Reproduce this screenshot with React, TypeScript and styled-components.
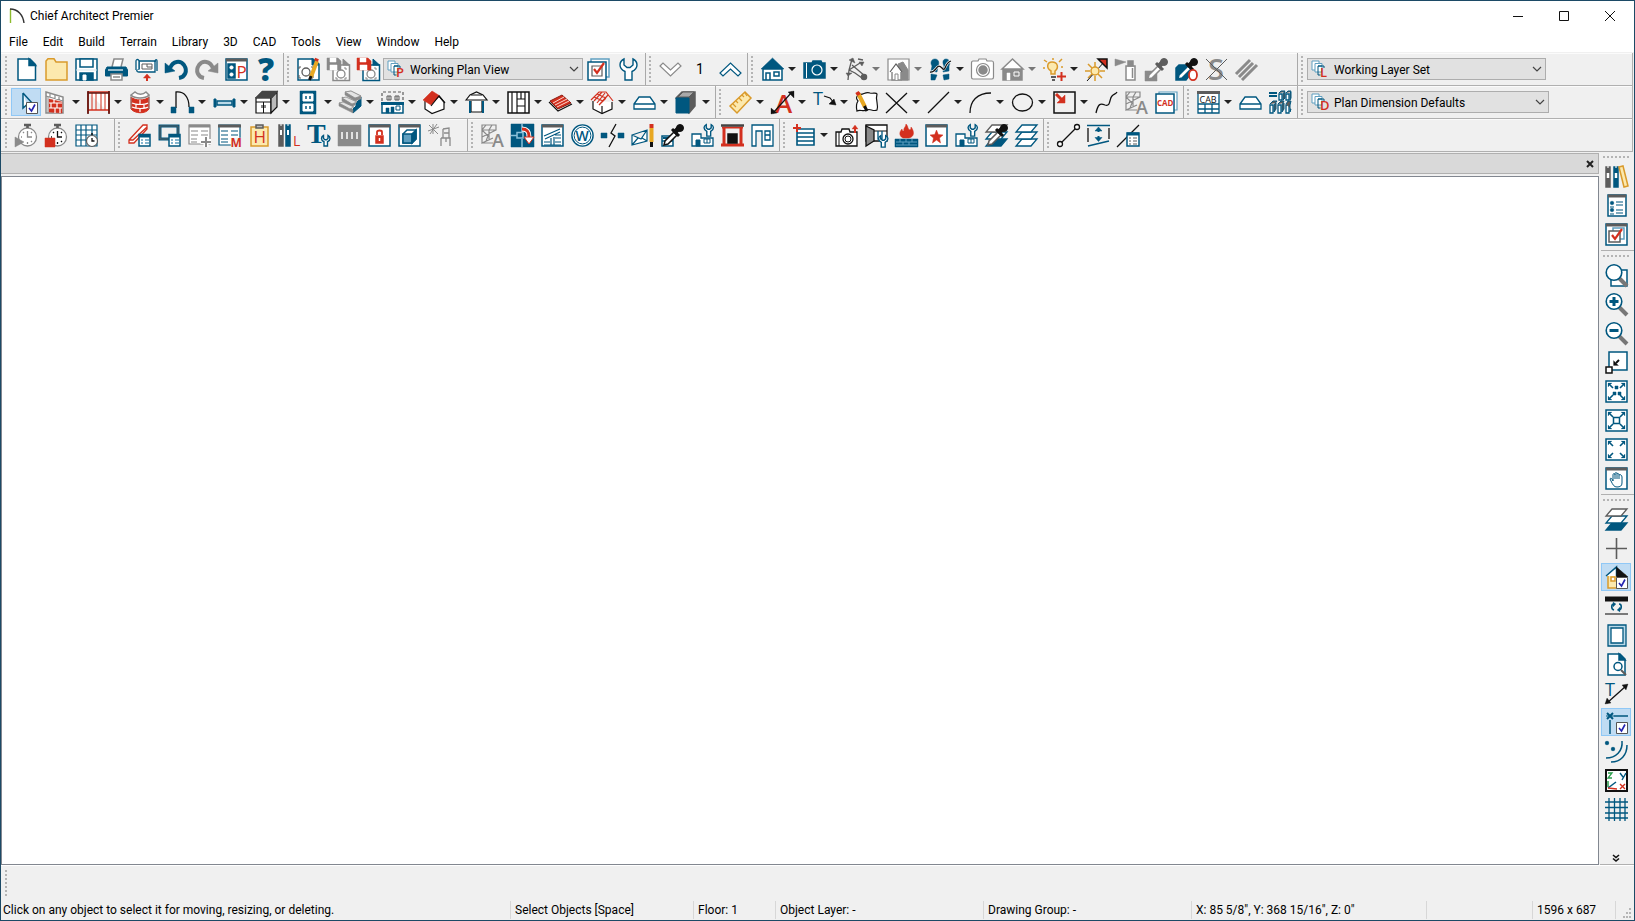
import React from 'react';
import styled, { createGlobalStyle, css } from 'styled-components';

const B = '#00577f';
const L = '#5f9fc0';
const G = '#8a8a8a';
const D = '#5c5c5c';
const R = '#d3301f';
const K = '#111111';
const O = '#d99a2b';
const Y = '#fce9ae';
const W = '#ffffff';
const N = 'none';

const Global = createGlobalStyle`
  * { box-sizing: border-box; }
  body { margin: 0; background: #fff; }
  body, button, select { font-family: Roboto, 'Open Sans', sans-serif; font-size: 12px; color: #000; }
`;

/* ---------- drawing helpers, all on a 23 unit square ---------- */
const p = (d: string, stroke = B, fill = N, w = 1.5) => <path d={d} stroke={stroke} fill={fill} strokeWidth={w} />;
const c = (x: number, y: number, r: number, stroke = B, fill = N, w = 1.5) => (
  <circle cx={x} cy={y} r={r} stroke={stroke} fill={fill} strokeWidth={w} />
);
const t = (x: number, y: number, s: string, fill: string, size: number, weight = 400, family = 'Open Sans, sans-serif') => (
  <text x={x} y={y} fill={fill} fontSize={size} fontWeight={weight} fontFamily={family}>{s}</text>
);
const wrench = (x: number, y: number, k: number, col = B) => (
  <g transform={`translate(${x} ${y}) scale(${k})`}>
    {p('M5 1V7L8 9.500H11L14 7V1C17 2.500 18 4.500 18 7C18 10 16 12 13 13.500V22H6V13.500C3 12 1 10 1 7C1 4.500 2 2.500 5 1Z', col, W, 1.4 / k)}
  </g>
);
const dropper = (dark: string, edge: string) => (
  <>
    {p('M3 21L4 17L13 8L16 11L7 20Z', edge, W, 1.5)}
    {p('M11 5L18 12', dark, N, 3)}
    {p('M13 9L18 4', dark, N, 5)}
    {c(19, 4, 3.5, dark, dark, 1)}
  </>
);
const wallA = (
  <>
    {p('M1 1H15V6H1ZM1 6V19L12 14M1 13L15 6M5 1L1 6L7 12L5 17M11 1L8 6V15M1 19L12 19', G, N, 1.2)}
    {t(11, 22.5, 'A', G, 18, 600)}
  </>
);
const zoomGlass = (
  <>
    {p('M14 14L22 22', '#777', N, 4)}
    {c(9, 8.5, 7.8, B, W, 1.6)}
  </>
);
const tickBox = (
  <>
    {p('M11.500 11.500H22.500V22.500H11.500Z', '#555', W, 1)}
    {p('M14 17L16.500 20L20 13.500', '#2424b0', N, 1.6)}
  </>
);
const hip = p('M1 13L6 6H17L22 13V18H1ZM1 13H22', B, W, 1.3);
const cabHouse = (
  <>
    {p('M1 10H10V14H22V22H1Z', B, W, 1.3)}
    {p('M5 22V16H9V22Z', B, B, 1)}
    {p('M13 15H19V19H13ZM16 15V19', B, N, 1)}
    {wrench(12.5, 0, 0.55)}
  </>
);
const diagArrows = (
  <>
    {p('M1 1H22V22H1Z', B, W)}
    {p('M8 8L5 5M15 8L18 5M8 15L5 18M15 15L18 18', B, N, 1.6)}
    {p('M3 3H7L3 7ZM20 3V7L16 3ZM3 20V16L7 20ZM20 20H16L20 16Z', B, B, 0.2)}
  </>
);
const stack = (a: string, b: string, fa: string, fb: string, fc: string) => (
  <>
    {p('M7 15H22L16 22H1Z', b, fc, 1.3)}
    {p('M7 8H22L16 15H1Z', b, fb, 1.3)}
    {p('M7 1H22L16 8H1Z', a, fa, 1.3)}
  </>
);
const copies = (letter: string) => (
  <>
    {p('M1 1H8V10H1Z', L, W, 1)}
    {p('M4 3.500H11V12H4Z', L, W, 1)}
    {p('M11 6H7V15H9.500M7 6H13V8', B, N, 1)}
    {t(9, 16.5, letter, R, 13, 600)}
  </>
);
const watch = (col: string, fill: string) => (
  <>
    {c(12.5, 13, 9, G, W, 1.3)}
    {p('M9 1H16M12.500 1V4', D, N, 2.6)}
    {p('M12.500 7V13H17M12.500 18V20M6 13H7M8 8L9 9M17 18L16 17M17 8L16 9', col, N, 1.3)}
    {fill === R ? p('M0 14H10V23H0Z', R, R, 0.5) : p('M0 13L9 18L0 23Z', fill, fill, 0.5)}
  </>
);
const panel = (
  <>
    {p('M1 1H22V22H1Z', B, W)}
    {p('M1 2H22', D, N, 3)}
  </>
);
const plug = (col: string) => (
  <>
    {p('M1 1H16L22 6V22H1Z', col, W)}
    {p('M15 0V7H22', col, col, 1)}
    {c(9, 14, 4, D, W, 1.3)}
    {p('M2 11V9H4M14 9H16V11M2 17V20H4M14 20H16V17', D, N, 1)}
  </>
);
const savePlug = (col: string, back: string) => (
  <>
    {p('M6 7H22.500V22.500H6Z', back, W)}
    {p('M16 1V7H22.500Z', back, back, 1)}
    {c(14, 16, 4, G, W, 1.3)}
    {p('M9 12V10H11M17 10H19V12M9 19V21H11M17 21H19V19', G, N, 1)}
    {p('M0 0H11L14 3V12H0Z', col, col, 0.5)}
    {p('M3 0H9V4H3ZM3 7H10V12H3Z', W, W, 0.5)}
  </>
);
const sqArrow = (
  <>
    {p('M4 1H22V19H4Z', B, W)}
    {p('M1 16H7V22H1Z', K, W)}
    {p('M14 9L11 12', K, N, 2)}
    {p('M8.500 14.500V9.500L13.500 14.500Z', K, K, 0.2)}
  </>
);
const chimney = (
  <>
    {p('M3 4V21M20 4V21', R, N, 3)}
    {p('M1 3.500H22', R, N, 2)}
    {p('M0 1.500H23', '#444', N, 2.5)}
    {p('M0 21H23', R, N, 3)}
    {p('M7 10H16V19H7Z', K, K)}
  </>
);
const smallList = (
  <>
    {p('M11 10.500H22V22H11Z', B, W)}
    {p('M11 12H22', B, N, 3)}
    {p('M13 16H15M17 16H21M13 19H15M17 19H21', L)}
  </>
);

const icons: Record<string, React.ReactNode> = {
  newPage: <>{p('M3 1H15L20.500 6.500V22H3Z', B, W)}{p('M14 1V7.500H20.500Z', B, B)}</>,
  open: p('M1 22V3L3 .8H9L11 4H22V22Z', O, Y),
  save: <>{p('M1 1H22V22H1Z', B, W)}{p('M5 1H18V9H5Z', B, W)}{p('M5 15H18V22H5Z', B, B)}{p('M8 17H11V22H8Z', W, W, 1)}{p('M1 12H22', '#d5e3ea', N, 1)}</>,
  print: <>{p('M7 9L9 1H18L16 9', G, W)}{p('M2 9H21L22.500 12V18H.5V12Z', B, B, 1)}{p('M3 12H18', W, N, 1.2)}{p('M6 16H17V22H6Z', G, W)}{p('M8 19H15', G)}</>,
  layout: <>{p('M4 3H20V14H4C1 14 1 11 4 11Z', B, W, 1.3)}{p('M4 11V3C4 1 1 1 1 3V12', B, W, 1.3)}{p('M20 4C20 1 22 1 22 3V13', B, N, 1.3)}{p('M7 6H17V11H7ZM12 6V9H17', D, N, 1)}{p('M12 23V18', R, N, 2)}{p('M8.500 20L12 16L15.500 20Z', R, R, 0.5)}</>,
  undo: <>{p('M5 10C8 3 15 2 19 7C23 13 20 19 14 20', B, N, 4)}{p('M0 5V15L10 13Z', B, B, 0.5)}</>,
  redo: <>{p('M18 10C15 3 8 2 4 7C0 13 3 19 9 20', G, N, 4)}{p('M23 5V15L13 13Z', G, G, 0.5)}</>,
  planP: <>{panel}{p('M3 6H10V20H3Z', B, B)}{c(6.5, 9.5, 1.8, W, W, 0.5)}{c(6.5, 16.5, 1.8, W, W, 0.5)}{t(11.5, 19.5, 'P', R, 17)}</>,
  help: t(3, 23, '?', B, 32, 800),
  planEdit: <>{plug(B)}{p('M14 19L20 3', '#e8a823', N, 4)}{p('M12.500 22L14 18', K, N, 3)}{p('M19 3L20 .5', R, N, 4)}</>,
  saveGray: savePlug(G, G),
  saveRed: savePlug(R, B),
  checkPages: <>{p('M4 1H22V19H4Z', L, W)}{p('M1 4H19V22H1Z', B, W)}{p('M5 8H15V18H5Z', D, W, 1.2)}{p('M7 11L10 15L17 5', R, N, 2.2)}</>,
  wrench: wrench(2, 0, 1),
  down: p('M1 8L4 5L11.500 12L19 5L22 8L11.500 18Z', G, W, 1.2),
  up: p('M1 15L4 18L11.500 11L19 18L22 15L11.500 5Z', B, W, 1.2),
  house: <>{p('M0 11L11.500 0L23 11Z', B, B, 0.5)}{p('M2 11H21V22H2Z', B, W)}{p('M5 22V15H9V22')}{p('M13 14H18V18H13Z')}</>,
  camera: <>{p('M1 5H9L10 3H18L19 5H22V20H1Z', B, B)}{p('M3.500 5V20', W, N, 1)}{c(14, 12, 5, W, B, 1.2)}{c(14, 12, 2.6, B, B, 1)}</>,
  joints: <>{p('M7 1L4 12L3 22M4 12L15 5M7 7L20 18M13 1L18 2M4 12L10 15L17 20', D, N, 1.3)}{c(19, 19, 2.5, D, D)}{p('M4 2L8 0L10 5ZM14 4L19 4L17 8ZM1 15H7L3 18Z', D, D, 0.5)}</>,
  houseFrame: <>{p('M1 1H22V22H1Z', G, W, 1.2)}{p('M11 6L16 4L21 12V22H14Z', G, G, 1)}{p('M5 13H14V22H5Z', G, W)}{p('M3 14L9 6L15 14', D, W, 1.2)}{p('M8 22V16H11V22', G, W, 1)}</>,
  feet: <>{p('M6 1C2 1 1 5 3 8L2 13L8 14L9 8C11 4 9 1 6 1ZM2 16L8 17L6 22H2ZM17 1C14 1 13 4 15 8L14 14L20 13V8C22 4 20 1 17 1ZM14 17L20 16L20 21L15 22Z', B, B, 0.5)}{p('M1 14C8 15 7 4 13 10C17 15 15 5 22 3', W, N, 2.4)}{p('M1 14C8 15 7 4 13 10C17 15 15 5 22 3', K, N, 1.3)}</>,
  cameraGray: <>{p('M2 3H7L8 1H15L16 3H21V3C22 3 22.500 4 22.500 5V19C22.500 20 22 21 21 21H2C1 21 .5 20 .5 19V5C.5 4 1 3 2 3Z', G, W, 1.2)}{c(12, 12, 6.5, G, W, 1.2)}{c(12, 12, 4, G, G)}</>,
  houseGray: <>{p('M2 11H21V22H2Z', G, G)}{p('M1 11L11.500 1L22 11Z', G, W)}{p('M6 15H9V22H6Z', W, W, 0.5)}{p('M13 14H18V18H13Z', W, G, 1)}</>,
  bulb: <>{p('M8 16V13C3 10 4 4 9 4C15 4 16 10 12 13V16Z', O, Y)}{p('M8 19H13M9 22H12', D, N, 2)}{p('M10 0V2M1 2L4 4M19 1L16 4M0 10H2M18 9H20', O)}{p('M18.500 14V23M14 18.500H23', R, N, 2)}</>,
  sun: <>{p('M10 4V9M10 18V23M0 13H5M15 13H20M3 6L7 10M3 20L7 16M17 20L13 16', O)}{p('M2 23L20 3', K, N, 1)}{c(10, 13, 4, O, Y)}{p('M13 1H22V10Z', K, R)}</>,
  spray: <>{p('M11 8H20V22H11Z', G, W)}{p('M13 3H18V8H13Z', G, G)}{p('M0 1L11 4L0 8Z', G, G, 0.5)}{p('M17.500 10V20', G)}</>,
  dropperGray: <>{p('M0 13H9L12 16V23H0Z', G, G, 0.5)}{dropper(D, G)}</>,
  dropperO: <>{p('M1 10L4 7H14V18L11 22H1Z', B, B)}{dropper(K, B)}<ellipse cx={18} cy={17} rx={4} ry={5.2} fill={W} stroke={R} strokeWidth={1.8} /></>,
  noS: <>{t(3, 22, 'S', G, 29, 600)}{p('M1 1L22 22M22 1L1 22', D, N, 1)}</>,
  stripes: p('M1 16L15 2M4 19L18 5M7 22L22 7', G, N, 3),

  select: <>{p('M8 2V17L11.500 14L14 20M8 2L18 13', B, W)}{tickBox}</>,
  wall: <>{p('M1 1L18 6V22H1Z', G, W)}{p('M1 5L18 10M5 3V6M10 4V8M14 6V9', G, N, 1.2)}{p('M4 8L17 11V22L4 21Z', R, R, 0.5)}{p('M4 12H17M4 17H17M9 8V12M6 12V17M12 12V17M10 17V22M15 17V22', W, N, 1.2)}{p('M3 6V22', G, N, 1)}</>,
  fence: <>{p('M1 1H22V22M1 1V22M1 19H22', R, W)}{p('M5 2V19M9 2V19M14 2V19M18 2V19', R, N, 1)}{p('M1 0V23M22 0V23M1 2H22', '#5b1510', N, 1.6)}</>,
  curved: <>{p('M2 6C6 10 16 10 20 6V18C17 23 6 23 2 18Z', R, R, 1)}{p('M2 4L6 1C9 4 14 4 17 1L20 4C16 8 6 8 2 4Z', G, W)}{p('M2 4V18M20 4V18', G, N, 1)}{p('M3 12C7 14 16 14 19 12M3 16C7 18 16 18 19 16M11 9V13M7 13V17M15 13V17M11 18V21', W, N, 1.2)}</>,
  door: <>{p('M5 17V1C13 0 18 6 18 16', K, N, 1.3)}{p('M0 16H5V22H0ZM18 16H23V22H18Z', B, B, 0.5)}</>,
  window: <>{p('M4 10H19V14H4Z', B, '#b9d9e8')}{p('M1 8H3V16H1ZM20 8H22V16H20Z', B, B, 1)}</>,
  cabinet: <>{p('M1 7H16V22H1Z', K, W, 1.2)}{p('M16 7L22 1V16L16 22Z', K, '#bbb', 1.2)}{p('M0 7L7 0H23L17 7Z', '#444', '#444', 0.5)}{p('M1 11H16M8.500 11V22M7 14V17M10 14V17', K, N, 1)}</>,
  outlet: <>{p('M3 0H19V23H3Z', B, B, 0.5)}{p('M6 3H16V10H6ZM6 13H16V20H6Z', W, W, 1)}{p('M9 5V8M13 5V8M9 15V18M13 15V18', B, N, 1.5)}</>,
  stairs: <>{p('M22 6V15L14 22V18L17 15V12L20 9Z', B, B, 1)}{p('M6 1L12 0L22 5V8L16 10L6 4ZM3 6L16 12V14L12 16L3 10ZM0 12L12 17L14 19V22L0 15Z', G, G, 0.5)}{p('M6 1L12 0L22 5L16 7ZM3 7L7 6L18 11L13 13ZM0 12L4 11L15 16L11 18Z', G, '#e4e4e4', 0.8)}</>,
  floors: <><path d="M1 10V1H22V10" stroke={D} strokeWidth={1.2} strokeDasharray="3 2" />{p('M1 12V22H22V12', B, W)}{p('M0 12.500H23', B, N, 3)}{p('M5 22V17H8V22ZM10 22V16H13V22Z', B, B, 0.5)}{p('M15 15H19V19H15Z', B, N, 1)}{p('M6 5H10V9H6ZM8 5V9M14 5H18V9H14ZM16 5V9', D, N, 1)}</>,
  roof: <>{p('M2 10V18L9 22.500L21 18V11L16 5', K, W, 1.2)}{p('M0 9L9 0L17 5L8 14Z', R, R, 0.5)}{p('M8 15L16 5L22 12', K, N, 1.2)}</>,
  porch: <>{p('M1 9L5 4L11.500 1L18 4L22 9Z', K, W, 1.2)}{p('M6 10V21H17V10', K, W, 1.2)}{p('M5 10V22M18 10V22', B, N, 2)}{p('M6 4H17', K, N, 1)}</>,
  framing: <>{p('M1 1H22V22H1Z', K, W)}{p('M5 1V22M10 1V22M18 1V22M10 8H18M10 15H18M14 1V8', K, N, 1.2)}</>,
  deck: <>{p('M1 10L13 4L22 12L9 18Z', '#8c1d14', R, 1)}{p('M4 12L15 6M6 14L18 8M8 16L20 10', '#ffd9d2', N, 1)}{p('M0 11L9 20L23 13', K, N, 1.2)}</>,
  truss: <>{p('M2 10V18L11 22.500L21 18V11', K, W, 1.2)}{p('M11 22V15', K, N, 1.2)}{p('M0 9L8 1H15L22 10M3 10L11 1M6 12L14 2M8 14L17 4M3 6L12 10M6 3L15 7M8 14L15 7', R, N, 1.2)}</>,
  hip,
  cube: <>{p('M1 7L7 1H20V15L14 22Z', D, D)}{p('M3 6L8 1H19L14 6Z', D, '#a9a9a9', 1)}{p('M1 7H14V22H1Z', B, B, 1)}</>,
  ruler: <>{p('M1 15L16 1L22 7L8 22Z', O, Y)}{p('M4 13L7 16M7 10L9 12M10 7L13 10M13 4L15 6M16 2L18 5', O, N, 1.2)}</>,
  textA: <>{t(4, 22, 'A', R, 26, 600)}{p('M2 22L21 1', K, N, 1.2)}{p('M0 23V17L6 22ZM23 0V7L17 1Z', K, K, 0.3)}</>,
  textT: <>{t(0, 14, 'T', B, 18, 400)}{p('M11 5L17 7L21 12', K, N, 1.2)}{p('M23 14L16 13L21 8Z', K, K, 0.5)}</>,
  poly: <>{p('M4 3C8 5 10 0 15 2C18 3 21 1 22 3C20 9 24 14 22 19C18 21 15 17 12 19C8 21 5 18 2 20C1 16 1 13 3 10C0 7 2 5 4 3Z', K, W, 1.2)}{p('M3 2L10 16', '#e8a823', N, 4)}{p('M9.500 15L12 20', K, N, 3)}{p('M2 1L4 4', R, N, 4)}</>,
  cross: p('M1 2L22 22M22 2L1 22', K, N, 1.3),
  line: p('M1 22L22 1', K, N, 1.3),
  arc: p('M1 22C1 10 8 2 22 2', K, N, 1.3),
  ellipse: <ellipse cx={11.5} cy={11.5} rx={10} ry={8.5} fill={N} stroke={K} strokeWidth={1.3} />,
  rect: <>{p('M1 1H22V22H1Z', K, N)}{p('M3 3L9 9', R, N, 3)}{p('M12 4V12H4Z', R, R, 0.5)}</>,
  spline: p('M1 22C3 13 5 12 10 14C16 16 14 8 17 5C19 3 21 3 22 1', K, N, 1.3),
  wallA,
  cad: <>{p('M4 1H22V19H4Z', L, W, 1.2)}{p('M1 3H19V22H1Z', B, W)}{t(2, 15, 'CAD', R, 8, 700)}</>,
  cab: <>{p('M1 1H22V22H1ZM1 13H22M1 18H22M8 13V22M15 13V22', B, W, 1.3)}{p('M0 1.500H23', D, N, 3)}{t(2.5, 11.5, 'CAB', K, 9)}</>,
  cabs: <>{p('M0 2H8M0 5H8', B, N, 2)}{p('M10 3H13V9H10ZM17 3H20V9H17ZM1 14H4V22H1ZM9 14H12V22H9ZM17 14H20V22H17Z', B, W, 1.3)}{p('M10 2L12 0H16L14 3V9L16 7V1M17 2L19 0H22L21 3V9L22 7V1M1 13L4 10H8L5 14V21L7 18V12M9 13L12 10H15L13 14V21L15 18V12M17 13L19 10H22L21 14V21L22 18', B, D, 1)}</>,

  watchGray: watch(G, G),
  watchRed: watch(K, R),
  tableWatch: <>{p('M1 1H22V22H1ZM1 6H22M1 11H22M1 16H22M6 1V22M11 1V22M17 1V22', B, W, 1.2)}{c(17, 17, 5.5, D, W, 1.2)}{p('M17 14V17H19.500M16 10H18', K, N, 1.3)}</>,
  deckEdit: <>{p('M1 16L15 1H19V5L6 19H1ZM1 16H5L19 3', R, W, 1.3)}{smallList}</>,
  squares: <>{p('M2 2H20V15H2Z', B, '#efefef', 3)}{p('M2 2H20V15H2Z', D, N, 1)}{smallList}</>,
  tablePlus: <>{p('M1 1H22V20H1Z', G, W, 1.2)}{p('M1 2H22', G, N, 3)}{p('M3 7H10M13 7H20M3 11H10M13 11H20M3 15H9M3 18H9', G, N, 1.2)}{p('M18 12V23M12.500 17.500H23', W, N, 5)}{p('M18 13V23M13 18H23', G, N, 2)}</>,
  tableM: <>{p('M1 1H22V21H1Z', B, W, 1.2)}{p('M0 2H23', D, N, 3)}{p('M3 7H10M13 7H20M3 11H10M13 11H20M3 15H10M3 18H10', B, N, 1.2)}{p('M13 14H23V23H13Z', '#f0f0f0', '#f0f0f0', 0.5)}{t(12.5, 23, 'M', R, 12, 700)}</>,
  clip: <>{p('M3 3H20V22H3Z', O, Y)}{p('M8 4H15V1H8Z', D, '#bbb')}{t(5.5, 19, 'H', R, 17, 400)}</>,
  booksL: <>{p('M1 1H5V22H1Z', D, D)}{p('M8 1H12V22H8Z', B, B)}{p('M3 6V11M10 6V11', W, N, 2)}{p('M3 0V2M10 0V2', W, N, 1)}{t(15, 22, 'L', R, 14)}</>,
  tWrench: <>{t(-1, 19, 'T', B, 28, 700, 'Liberation Serif, serif')}{wrench(13, 11, 0.5)}</>,
  grayBars: <>{p('M0 1H23V22H0Z', G, G, 0.5)}{p('M4 8V15M9 8V15M14 8V15M19 8V15', W, N, 1.5)}</>,
  lock: <>{panel}{p('M8 12H15V19H8Z', R, R)}{p('M9 11V8C9 6 14 6 14 8V11', R, N, 1.8)}{p('M11.500 14V17', W)}</>,
  cubePanel: <>{panel}{p('M5 10L9 6H18V15L14 19H5Z', B, W)}{p('M5 10H14V19H5Z', B, L)}{p('M14 10L18 6V15L14 19Z', B, B)}</>,
  chair: <>{p('M13 14V22M13 14H22V22M15 5L21 4V14M15 5V14M18 14V18M16 9H21', G, N, 1.3)}{p('M0 7L11 3M5 0V10M1 1L10 10M9 0L2 10', G, N, 1)}</>,
  blueArrow: <>{p('M0 0H23V23H0Z', B, B, 0.5)}{p('M0 11.500H6M11 0V8M11 15V23M6 8.500H12V14H6Z', '#8bc1da')}{p('M11 5C18 5 18 10 18 13', W, N, 5)}{p('M11 5C18 5 18 10 18 13', R, N, 3)}{p('M13 13H23L18 20Z', R, W, 1)}</>,
  roofPanel: <>{panel}{p('M3 12L19 5M4 15L19 8M10 14V21M13 13V21M3 18H9M14 11H20M14 14H20M14 18H20M3 21H20', B, N, 1.2)}</>,
  circleW: <>{c(11.5, 11.5, 10.6, B, W, 1.4)}{c(11.5, 11.5, 8.4, B, W, 1)}{t(4.5, 16.5, 'W', B, 14, 600)}</>,
  breakLine: <>{p('M0 9H6V14H0ZM17 9H23V14H17Z', B, B, 0.5)}{p('M15 0L10 9L14 12L8 23', K, N, 1.3)}</>,
  envPencil: <>{p('M1 11L16 6V17L1 21ZM1 11L10 15L16 6M1 21L7 14M16 17L11 14', B, W, 1.2)}{p('M20.500 4V18', '#e8a823', N, 4)}{p('M20.500 18V23', K, N, 3)}{p('M20.500 0V4', R, N, 4)}</>,
  dropperBlue: <>{p('M1 12H12V22H1ZM1 17H12', B, W)}{p('M2 14H11', B, B, 2)}{dropper(K, K)}</>,
  cabHouse,
  chimney,
  doorWin: <>{p('M1 1H22V22H11V7H5V22H1Z', B, W, 1.3)}{p('M14 7H19V16H14ZM14 11H19', B, N, 1.3)}</>,
  listPlus: <>{p('M4 5H21V21H4ZM4 9H21M4 13H21M4 17H21', B, W, 1.6)}{p('M4 0V8M0 4H8', R, N, 2)}</>,
  cameraUp: <>{p('M1 8H6L7 5H14L15 8H22V22H1Z', K, W, 1.3)}{p('M4 8V22', K, N, 1)}{c(13, 15, 5, K, W, 1.3)}{c(13, 15, 3, K, W, 1)}{p('M20 9V3', R, N, 2)}{p('M17 5L20 1L23 5Z', R, R, 0.3)}</>,
  cabWrench: <>{p('M1 1H22V17H1Z', K, W, 1.3)}{p('M1 2L9 6V17L1 22Z', K, '#8a8a8a', 1.3)}{p('M9 7H22', K, N, 1)}{p('M13 7V15H17V7', B, N, 1.3)}{wrench(13, 11, 0.55)}</>,
  fire: <>{p('M11 0C14 3 12 5 15 6C16 5 16 4 16 3C20 8 19 13 14 14H8C4 12 4 8 7 5C7 7 8 7 9 7C8 4 11 3 11 0Z', R, R, 0.5)}{p('M0 15H23V23H0Z', B, B, 0.5)}{p('M1 18H22M1 21H22M5 15V18M11 15V18M17 15V18M8 18V21M14 18V21', L, N, 1)}</>,
  star: <>{panel}{p('M11.500 6L13.300 10.500L18 11L14.500 14L15.500 19L11.500 16L7.500 19L8.500 14L5 11L9.700 10.500Z', R, R, 0.5)}</>,
  stackDrop: <>{stack(D, B, W, W, B)}{dropper(K, D)}</>,
  stackBlue: stack(B, B, W, W, W),
  nodes: <>{p('M3 20L20 3', K, N, 1.3)}{c(3, 20, 2.5, K, W, 1.3)}{c(20, 3, 2.5, K, W, 1.3)}</>,
  spacing: <>{p('M0 1.500H23M1 22L22 17', B, N, 1.6)}{p('M1 4V18M22 4V15', K, N, 1.3)}{p('M11.500 5V8M11.500 12V15', B, N, 2)}{p('M8 7L11.500 3L15 7ZM8 13.500H15L11.500 17.500Z', B, B, 0.5)}</>,
  lineList: <>{p('M0 23L22 1', K, N, 1.3)}{p('M10 9H22V22H10Z', B, W)}{p('M10 10H22', B, N, 3)}{p('M12 14H14M16 14H20M12 17H14M16 17H20M12 20H14M16 20H20', D, N, 1.2)}</>,

  books: <>{p('M1 2H5V22H1ZM1 2L3 4L5 2', D, D)}{p('M9 2H13V22H9ZM9 2L11 4L13 2', B, B)}{p('M3 8V13M11 8V13', W, N, 2.5)}{p('M3 0V3M11 0V3', '#f0f0f0', N, 1.2)}{p('M14 2L18 1L23 21L19 22Z', O, Y)}</>,
  checklist: <>{p('M3 1H21V22H3Z', B, W)}{p('M3 2H21', D, N, 3)}{c(7, 9, 1.8, B, B, 0.5)}{c(7, 16, 1.8, B, B, 0.5)}{p('M5 13H9M5 20H9M11 8H18M11 11H18M11 16H18M11 19H18', B, N, 1.2)}</>,
  checkPanel: <>{panel}{p('M8 5H19V16H8Z', L, W)}{p('M4 8H15V19H4Z', D, W)}{p('M7 12L10 16L17 6', R, N, 2.2)}</>,
  zoomPage: <>{p('M6 6H22V22H6Z', B, W)}{zoomGlass}</>,
  zoomIn: <>{zoomGlass}{p('M9 4V13M4.500 8.500H13.500', B, N, 3)}</>,
  zoomOut: <>{zoomGlass}{p('M4.500 8.500H13.500', B, N, 3)}</>,
  sqArrow,
  fitDots: <>{diagArrows}{p('M10 6H13V9H10ZM8 12H11V15H8ZM13 12H16V15H13Z', B, B, 0.5)}</>,
  fitBox: <>{diagArrows}{p('M8.500 8.500H14.500V14.500H8.500Z', B, W)}</>,
  fit: diagArrows,
  pan: <>{panel}{p('M6 14L5 12C6 10 7 12 8 14V8C8 6 10 6 10 8V7C10 5 12 5 12 7C12 6 14 6 14 8C15 7 17 8 17 10V16C17 19 15 20 12 20C9 20 8 18 6 14ZM10 8V12M12 7V12M14 8V12', B, W, 1)}</>,
  layersMix: stack(D, B, W, W, B),
  plus: p('M11.500 1V22M1 11.500H22', D, N, 1.6),
  houseTick: <>{p('M3 9H20V22H3Z', O, Y)}{p('M6 11H10V15H6Z', O, W)}{p('M1 10L11.500 1V10', B, W)}{p('M11.500 1L23 11H11.500Z', K, K, 0.5)}{tickBox}</>,
  barRotate: <>{p('M0 4H23', K, N, 5)}{p('M0 19H23', D, N, 1.6)}{p('M9 9C6 9 6 14 9 15M14 15C17 14 17 9 14 9', B, N, 1.6)}{p('M8 7L11 9L8 12ZM15 17L12 15L15 12Z', B, B, 0.2)}</>,
  frame: <>{p('M3 1H21V22H3Z', B, '#b9d9e8', 1.3)}{p('M6 4H18V19H6Z', B, W, 1.3)}</>,
  pageZoom: <>{p('M3 1H15L20 6V22H3Z', B, W)}{p('M14 1V7H20Z', B, B)}{p('M16 17L21 22', D, N, 2)}{c(13, 13.5, 4, B, W)}</>,
  tArrow: <>{t(0, 14, 'T', B, 18, 400)}{p('M2 21L21 4', K, N, 1.3)}{p('M0 22L2 16L6 21ZM23 2L17 3L21 8Z', K, K, 0.3)}</>,
  snapX: <>{p('M5 9V23M9 5H23', B)}{p('M2 2L8 8M8 2L2 8', B, N, 2)}{p('M1 5H9', B, N, 1)}{tickBox}</>,
  arcs: <>{c(2, 3, 2, B, B, 0.2)}{c(8, 9, 2, B, B, 0.2)}{p('M17 1C18 11 11 18 1 18M22 5C22 15 16 22 6 22', B)}</>,
  axes: <>{p('M1 1H22V22H1Z', K, W, 2)}{p('M3 4H7L3 9H7', '#2a9d4b', N, 1.3)}{p('M15 4L18 8M21 4L17 11', B, N, 1.4)}{p('M15 15L20 20M20 15L15 20', R, N, 1.4)}{p('M3 12V18', '#2a9d4b')}{p('M3 19L11 13', B)}{p('M3 19L12 20', R)}</>,
  grid: p('M4 0V23M9.500 0V23M15 0V23M20 0V23M0 4H23M0 9.500H23M0 15H23M0 20H23', B, N, 1.3),
  copiesP: copies('P'),
  copiesL: copies('L'),
  copiesD: copies('D'),
};

/* ---------- styled parts ---------- */
const Frame = styled.div`
  display: flex; flex-direction: column; min-height: 100vh;
  border: 1px solid #1c4a66; background: #fff;
`;
const TitleBar = styled.header`
  display: flex; align-items: center; height: 29px; padding: 0 1px 0 8px;
`;
const Title = styled.h1`
  flex: 1; margin: 0 0 0 5px; font-size: 12px; font-weight: 400; line-height: 16px;
`;
const Glyph = styled.svg<{ $s: number }>`
  display: block; flex: none; width: ${q => q.$s}px; height: ${q => q.$s}px; fill: none; overflow: visible;
`;
const CaptionButton = styled.button`
  display: flex; align-items: center; justify-content: center;
  width: 46px; height: 28px; padding: 0; border: 0; background: transparent;
`;
const MenuBar = styled.nav`
  display: flex; height: 22px; align-items: center; padding: 2px 0 0 1px;
`;
const MenuItem = styled.button`
  padding: 0 8px 0 7px; border: 0; background: transparent; line-height: 20px;
`;
const Toolbars = styled.div`
  border-top: 1px solid #f0f0f0; background: #f0f0f0;
`;
const Row = styled.div`
  display: flex; height: 33px; padding-left: 1px; margin-right: 1px;
  border-bottom: 1px solid #b0b0b0; border-right: 1px solid #b0b0b0;
  box-shadow: inset 0 1px #fbfbfb;
`;
const Group = styled.div<{ $tail?: number; $last?: boolean }>`
  display: flex; align-items: center; padding-right: ${q => q.$tail ?? 2}px;
  ${q => !q.$last && css`border-right: 1px solid #a9a9a9;`}
`;
const dots = css`
  background-image: radial-gradient(circle at 1px 1px, #b4b4b4 1px, transparent 1px);
`;
const Grip = styled.span`
  flex: none; width: 2px; height: 26px; margin: 0 4px 0 3px; ${dots} background-size: 2px 4px;
`;
const SideGrip = styled.span`
  flex: none; width: 26px; height: 2px; margin: 4px 0 4px 2px; ${dots} background-size: 4px 2px;
`;
const Tool = styled.button<{ $on?: boolean }>`
  display: flex; align-items: center; justify-content: center; flex: none;
  width: 30px; height: 28px; padding: 0;
  border: 1px solid ${q => (q.$on ? '#90c8f6' : 'transparent')};
  background: ${q => (q.$on ? '#c0dcf3' : 'transparent')};
`;
const Drop = styled.button<{ $dim?: boolean }>`
  flex: none; width: 12px; height: 28px; padding: 0; border: 0; background: transparent;
  &::before {
    content: ''; display: block; width: 0; margin-left: 1px;
    border: 4px solid transparent; border-bottom: 0; border-top-color: ${q => (q.$dim ? '#777' : '#222')};
  }
`;
const Floor = styled.output`
  width: 30px; text-align: center; font-size: 14px; line-height: 20px;
`;
const ComboBox = styled.label<{ $w: number }>`
  position: relative; display: block; width: ${q => q.$w}px; height: 22px;
`;
const Select = styled.select`
  appearance: none; display: block; width: 100%; height: 22px; padding: 2px 24px 0 26px;
  border: 1px solid #adadad; border-radius: 0; background: #e1e1e1; line-height: 18px;
`;
const ComboIcon = styled.span`
  position: absolute; left: 4px; top: 2px; pointer-events: none;
`;
const ComboArrow = styled.span`
  position: absolute; right: 4px; top: 6px; pointer-events: none;
`;
const Middle = styled.div`
  flex: 1; display: flex; background: #f0f0f0;
`;
const Documents = styled.main`
  flex: 1; min-width: 0; display: flex; flex-direction: column; padding: 1px 1px 0 0;
`;
const TabStrip = styled.div`
  display: flex; align-items: center; justify-content: flex-end; height: 21px; margin-bottom: 2px;
  border: 1px solid #b0b0b0; border-left: 0; background: #d9d9d9;
`;
const TabClose = styled.button`
  width: 17px; height: 19px; padding: 0; border: 0; background: transparent;
  display: flex; align-items: center; justify-content: center;
`;
const Canvas = styled.section`
  flex: 1; background: #fff; border: 1px solid #828790;
`;
const Sidebar = styled.aside`
  display: flex; flex-direction: column; width: 34px; padding-left: 1px; border-bottom: 1px solid #b0b0b0;
`;
const SideGroup = styled.div<{ $last?: boolean }>`
  display: flex; flex-direction: column; padding-bottom: 1px;
  ${q => !q.$last && css`border-bottom: 1px solid #b0b0b0;`}
  & > button { margin-bottom: 1px; }
`;
const More = styled.button`
  display: flex; justify-content: center; width: 30px; height: 10px; margin-top: auto; padding: 0; border: 0; background: transparent;
`;
const CommandPanel = styled.div`
  display: flex; align-items: flex-start; height: 35px; padding: 4px 0 0 1px;
  border-top: 1px solid #fff; background: #f0f0f0;
`;
const StatusBar = styled.footer`
  display: grid; height: 20px; background: #f0f0f0; align-items: center;
  grid-template-columns: 1fr 183px 82px 208px 208px 235px 106px 83px 19px;
`;
const Status = styled.span<{ $first?: boolean }>`
  height: 18px; line-height: 18px; white-space: nowrap; overflow: hidden;
  padding-left: ${q => (q.$first ? 2 : 4)}px;
  ${q => !q.$first && css`border-left: 1px solid #d7d7d7;`}
`;
const SizeGrip = styled.span`
  height: 18px; border-left: 1px solid #d7d7d7; display: flex; align-items: flex-end; justify-content: flex-end; padding: 0 2px 1px 0;
`;

/* ---------- components ---------- */
const Icon = ({ name }: { name: string }) => (
  <Glyph $s={24} viewBox="-1 -1 24 24" aria-hidden>{icons[name]}</Glyph>
);

// A trailing "+" marks a tool with a drop-down arrow, "-" one whose arrow is dimmed, "*" a pressed tool.
const Tools = ({ list }: { list: string }) => (
  <>
    {list.split(' ').map((entry, i) => {
      const name = entry.replace(/[+*-]$/, '');
      const mark = entry.slice(name.length);
      return (
        <React.Fragment key={i}>
          <Tool $on={mark === '*'} aria-label={name} aria-pressed={mark === '*' ? true : undefined}><Icon name={name} /></Tool>
          {(mark === '+' || mark === '-') && <Drop $dim={mark === '-'} aria-label={`${name} options`} />}
        </React.Fragment>
      );
    })}
  </>
);

const Combo = ({ icon, value, width, label }: { icon: string; value: string; width: number; label: string }) => (
  <ComboBox $w={width}>
    <Select aria-label={label}><option>{value}</option></Select>
    <ComboIcon><Glyph $s={18} viewBox="0 0 18 18">{icons[icon]}</Glyph></ComboIcon>
    <ComboArrow><Glyph $s={10} viewBox="0 0 10 10">{p('M1 3L5 7L9 3', '#444', N, 1.2)}</Glyph></ComboArrow>
  </ComboBox>
);

const menus = ['File', 'Edit', 'Build', 'Terrain', 'Library', '3D', 'CAD', 'Tools', 'View', 'Window', 'Help'];
const statuses = ['Select Objects [Space]', 'Floor: 1', 'Object Layer: -', 'Drawing Group: -', 'X: 85 5/8", Y: 368 15/16", Z: 0"', '', '1596 x 687'];

export default function App() {
  return (
    <Frame>
      <Global />
      <TitleBar>
        <Glyph $s={16} viewBox="0 0 16 16">{p('M1.500 1V15', '#8dbb2e', N, 1.4)}{p('M1 1C9 1 14 7 15 15', '#333', N, 1.4)}</Glyph>
        <Title>Chief Architect Premier</Title>
        <CaptionButton aria-label="Minimize"><Glyph $s={10} viewBox="0 0 10 10">{p('M0 5.500H10', K, N, 1)}</Glyph></CaptionButton>
        <CaptionButton aria-label="Maximize"><Glyph $s={10} viewBox="0 0 10 10">{p('M.5 .5H9.500V9.500H.5Z', K, N, 1)}</Glyph></CaptionButton>
        <CaptionButton aria-label="Close"><Glyph $s={10} viewBox="0 0 10 10">{p('M0 0L10 10M10 0L0 10', K, N, 1)}</Glyph></CaptionButton>
      </TitleBar>
      <MenuBar>{menus.map(m => <MenuItem key={m}>{m}</MenuItem>)}</MenuBar>

      <Toolbars>
        <Row>
          <Group><Grip /><Tools list="newPage open save print layout undo redo planP help" /></Group>
          <Group>
            <Grip /><Tools list="planEdit saveGray saveRed" />
            <Combo icon="copiesP" value="Working Plan View" width={200} label="Plan view" />
            <Tools list="checkPages wrench" />
          </Group>
          <Group><Grip /><Tools list="down" /><Floor>1</Floor><Tools list="up" /></Group>
          <Group $tail={36}>
            <Grip /><Tools list="house+ camera+ joints- houseFrame- feet+ cameraGray houseGray- bulb+ sun spray dropperGray dropperO noS stripes" />
          </Group>
          <Group $last><Grip /><Combo icon="copiesL" value="Working Layer Set" width={239} label="Layer set" /></Group>
        </Row>
        <Row>
          <Group><Grip /><Tools list="select* wall+ fence+ curved+ door+ window+ cabinet+ outlet+ stairs+ floors+ roof+ porch+ framing+ deck+ truss+ hip+ cube+" /></Group>
          <Group><Grip /><Tools list="ruler+ textA+ textT+ poly cross+ line+ arc+ ellipse+ rect+ spline wallA cad" /></Group>
          <Group><Grip /><Tools list="cab+ hip cabs" /></Group>
          <Group $last><Grip /><Combo icon="copiesD" value="Plan Dimension Defaults" width={242} label="Dimension defaults" /></Group>
        </Row>
        <Row>
          <Group $tail={13}><Grip /><Tools list="watchGray watchRed tableWatch" /></Group>
          <Group $tail={13}><Grip /><Tools list="deckEdit squares tablePlus tableM clip booksL tWrench grayBars lock cubePanel chair" /></Group>
          <Group><Grip /><Tools list="wallA blueArrow roofPanel circleW breakLine envPencil dropperBlue cabHouse chimney doorWin" /></Group>
          <Group><Grip /><Tools list="listPlus+ cameraUp cabWrench fire star cabHouse stackDrop stackBlue" /></Group>
          <Group $last><Grip /><Tools list="nodes spacing lineList" /></Group>
        </Row>
      </Toolbars>

      <Middle>
        <Documents>
          <TabStrip>
            <TabClose aria-label="Close view"><Glyph $s={8} viewBox="0 0 8 8">{p('M1 1L7 7M7 1L1 7', '#222', N, 2)}</Glyph></TabClose>
          </TabStrip>
          <Canvas />
        </Documents>
        <Sidebar>
          <SideGroup><SideGrip /><Tools list="books checklist checkPanel" /></SideGroup>
          <SideGroup><SideGrip /><Tools list="zoomPage zoomIn zoomOut sqArrow fitDots fitBox fit pan" /></SideGroup>
          <SideGroup $last><SideGrip /><Tools list="layersMix plus houseTick* barRotate frame pageZoom tArrow snapX* arcs axes grid" /></SideGroup>
          <More aria-label="More tools"><Glyph $s={8} viewBox="0 0 8 8">{p('M1 1L4 3.500L7 1M1 4.500L4 7L7 4.500', K, N, 1.6)}</Glyph></More>
        </Sidebar>
      </Middle>

      <CommandPanel><Grip /></CommandPanel>
      <StatusBar>
        <Status $first>Click on any object to select it for moving, resizing, or deleting.</Status>
        {statuses.map((s, i) => <Status key={i}>{s}</Status>)}
        <SizeGrip>
          <Glyph $s={10} viewBox="0 0 10 10">{p('M7 1H9M7 5H9M4 5H6M7 9H9M4 9H6M1 9H3', '#b5b5b5', N, 2)}</Glyph>
        </SizeGrip>
      </StatusBar>
    </Frame>
  );
}
